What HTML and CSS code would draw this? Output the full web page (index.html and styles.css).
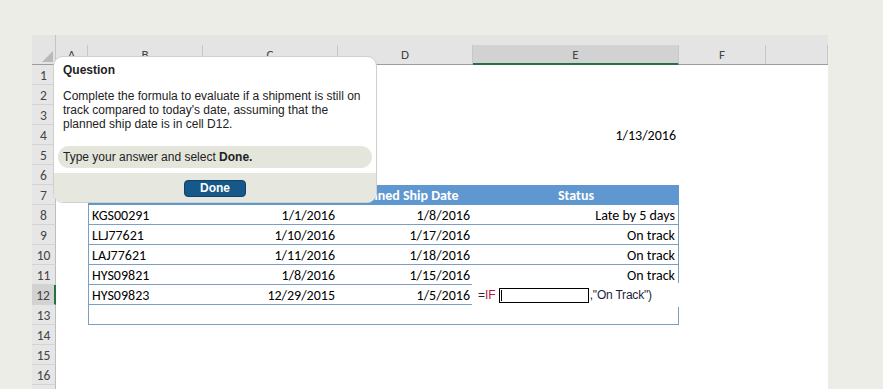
FILE: index.html
```html
<!DOCTYPE html>
<html lang="en">
<head>
    <meta charset="UTF-8">
    <meta name="viewport" content="width=device-width, initial-scale=1.0">
    <title>Shipment tracking question</title>
    <link rel="stylesheet" href="styles.css">
</head>
<body>
    <div class="sheet">
        <!-- column headers -->
        <div class="row col-heads">
            <div class="corner"><span class="corner-mark"></span></div>
            <div class="ch">A</div>
            <div class="ch">B</div>
            <div class="ch">C</div>
            <div class="ch">D</div>
            <div class="ch active">E</div>
            <div class="ch">F</div>
            <div class="ch"></div>
        </div>

        <div class="row"><div class="rh">1</div></div>
        <div class="row"><div class="rh">2</div></div>
        <div class="row"><div class="rh">3</div></div>
        <div class="row">
            <div class="rh">4</div>
            <div></div><div></div><div></div><div></div>
            <div class="cell num">1/13/2016</div>
        </div>
        <div class="row"><div class="rh">5</div></div>
        <div class="row"><div class="rh">6</div></div>

        <!-- shipment table -->
        <div class="row">
            <div class="rh">7</div>
            <div></div>
            <div class="th">Shipment</div>
            <div class="th">Ship Date</div>
            <div class="th">Planned Ship Date</div>
            <div class="th">Status</div>
        </div>
        <div class="row">
            <div class="rh">8</div>
            <div></div>
            <div class="td first">KGS00291</div>
            <div class="td num">1/1/2016</div>
            <div class="td num">1/8/2016</div>
            <div class="td num last">Late by 5 days</div>
        </div>
        <div class="row">
            <div class="rh">9</div>
            <div></div>
            <div class="td first">LLJ77621</div>
            <div class="td num">1/10/2016</div>
            <div class="td num">1/17/2016</div>
            <div class="td num last">On track</div>
        </div>
        <div class="row">
            <div class="rh">10</div>
            <div></div>
            <div class="td first">LAJ77621</div>
            <div class="td num">1/11/2016</div>
            <div class="td num">1/18/2016</div>
            <div class="td num last">On track</div>
        </div>
        <div class="row">
            <div class="rh">11</div>
            <div></div>
            <div class="td first">HYS09821</div>
            <div class="td num">1/8/2016</div>
            <div class="td num">1/15/2016</div>
            <div class="td num last">On track</div>
        </div>
        <div class="row">
            <div class="rh active">12</div>
            <div></div>
            <div class="td first">HYS09823</div>
            <div class="td num">12/29/2015</div>
            <div class="td num">1/5/2016</div>
            <div class="td num last"></div>
        </div>
        <div class="row">
            <div class="rh">13</div>
            <div></div>
            <div class="td first"></div>
            <div class="td"></div>
            <div class="td"></div>
            <div class="td last"></div>
        </div>

        <div class="row"><div class="rh">14</div></div>
        <div class="row"><div class="rh">15</div></div>
        <div class="row"><div class="rh">16</div></div>
        <div class="row"><div class="rh"></div></div>

        <!-- formula being typed in E12 -->
        <div class="formula">
            <span class="f-eq">=</span><span class="f-fn">IF</span>
            <span class="f-box"></span><span class="f-rest">,"On Track")</span>
        </div>

        <!-- question popup -->
        <div class="popup">
            <div class="popup-body">
                <div class="q-title">Question</div>
                <p class="q-text">Complete the formula to evaluate if a shipment is still on track compared to today's date, assuming that the planned ship date is in cell D12.</p>
                <div class="q-hint">Type your answer and select <b>Done.</b></div>
            </div>
            <div class="popup-foot">
                <button type="button" class="done-btn">Done</button>
            </div>
        </div>
    </div>
</body>
</html>
```

FILE: styles.css
```css
body {
    margin: 0;
    height: 389px;
    overflow: hidden;
    background: #ededE8;
    font-family: Carlito, Lato, sans-serif;
}

.sheet {
    position: relative;
    margin: 35px 0 0 32px;
    width: 796px;
    background: #fff;
}

.row {
    display: grid;
    grid-template-columns: 24px 32px 115px 135px 135px 206px 87px 62px;
    height: 20px;
    font-size: 14px;
    line-height: 22px;
    color: #000;
}

/* column header strip */
.col-heads {
    height: 30px;
    align-items: end;
    background: #e4e4e4;
    border-bottom: 1px solid #9c9c9c;
    box-sizing: border-box;
}

.corner {
    position: relative;
    height: 29px;
    border-right: 1px solid #c4c4c4;
    box-sizing: border-box;
}

.corner-mark {
    position: absolute;
    right: 2px;
    bottom: 2px;
    width: 0;
    height: 0;
    border-left: 11px solid transparent;
    border-bottom: 11px solid #b9b9b9;
}

.ch {
    height: 19px;
    text-align: center;
    font-size: 13px;
    line-height: 19px;
    color: #444;
    border-right: 1px solid #c8c8c8;
    box-sizing: border-box;
}

.ch.active {
    background: #d2d2d2;
    border-bottom: 2px solid #217346;
    margin-bottom: -1px;
    height: 20px;
}

/* row numbers */
.rh {
    background: #e6e6e6;
    border-right: 1px solid #bdbdbd;
    border-bottom: 1px solid #d3d3d3;
    text-align: center;
    font-size: 13.5px;
    color: #444;
    box-sizing: border-box;
    overflow: hidden;
}

.rh.active {
    background: #d2d2d2;
    border-right: 2px solid #217346;
}

.cell, .td, .th {
    padding: 0 3px;
    white-space: nowrap;
    overflow: hidden;
}

.num {
    text-align: right;
}

.th {
    background: #5f98d0;
    color: #fff;
    font-weight: bold;
    text-align: center;
}

.td {
    border-bottom: 1px solid #7d9ec4;
    box-sizing: border-box;
}

.td.first {
    border-left: 1px solid #7d9ec4;
}

.td.last {
    border-right: 1px solid #7d9ec4;
}

/* formula overlay on E12 */
.formula {
    position: absolute;
    left: 440px;
    top: 248px;
    width: 210px;
    height: 24px;
    padding-left: 6px;
    box-sizing: border-box;
    background: #fff;
    display: flex;
    align-items: center;
    font-family: "Liberation Sans", Arial, sans-serif;
    font-size: 12px;
    color: #1c1c3c;
}

.f-eq {
    color: #2a2040;
}

.f-fn {
    color: #b0203c;
    margin-right: 3px;
}

.f-box {
    position: relative;
    width: 90px;
    height: 15px;
    border: 1px solid #000;
    box-sizing: border-box;
    margin-right: 1px;
}

.f-box::before {
    content: "";
    position: absolute;
    left: 1px;
    top: 1px;
    bottom: 1px;
    width: 1px;
    background: #000;
}

.f-rest {
    letter-spacing: -0.2px;
}

/* question popup */
.popup {
    position: absolute;
    left: 21px;
    top: 21px;
    width: 324px;
    height: 147px;
    box-sizing: border-box;
    border: 1px solid #cdd1cc;
    border-radius: 10px;
    background: #fff;
    overflow: hidden;
    display: flex;
    flex-direction: column;
    font-family: "Liberation Sans", Arial, sans-serif;
    font-size: 12px;
    line-height: 14px;
    color: #222;
}

.popup-body {
    padding: 6px 4px 5px;
}

.q-title {
    padding-left: 5px;
    font-weight: bold;
}

.q-text {
    margin: 12px 0 0;
    padding: 0 5px;
}

.q-hint {
    margin-top: 15px;
    height: 22px;
    line-height: 22px;
    padding-left: 5px;
    border-radius: 11px;
    background: #e4e6dc;
}

.popup-foot {
    flex: 1;
    background: #e6e8e0;
    display: flex;
    justify-content: center;
    padding-top: 7px;
}

.done-btn {
    width: 62px;
    height: 17px;
    padding: 0;
    border: 1px solid #0f426b;
    border-radius: 4px;
    background: #17588a;
    color: #fff;
    font-family: "Liberation Sans", Arial, sans-serif;
    font-size: 12px;
    font-weight: bold;
    line-height: 15px;
}
```
